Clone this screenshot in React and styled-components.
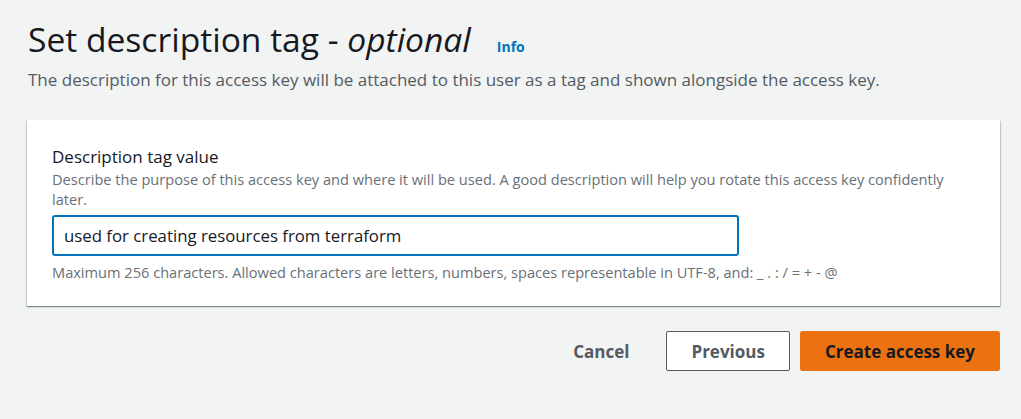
import React from "react";
import styled, { createGlobalStyle } from "styled-components";

const Global = createGlobalStyle`
  html, body { margin: 0; padding: 0; background: #f2f3f3; }
  body { font-family: "Open Sans", "Noto Sans", sans-serif; color: #16191f; }
`;

const Page = styled.div`
  padding: 16px 21px 0 27px;
  display: flex;
  flex-direction: column;
`;

const Header = styled.header`
  padding-left: 1px;
  margin-bottom: 28px;
`;

const TitleRow = styled.div`
  display: flex;
  align-items: baseline;
  gap: 26px;
`;

const Title = styled.h1`
  margin: 0;
  font-size: 33.6px;
  line-height: 46px;
  font-weight: 400;
  color: #16191f;
  em { font-style: italic; }
`;

const InfoLink = styled.a`
  font-size: 14px;
  font-weight: 700;
  color: #0073bb;
  text-decoration: none;
`;

const Lead = styled.p`
  margin: 6px 0 0;
  font-size: 17px;
  line-height: 24px;
  color: #545b64;
`;

const Card = styled.section`
  background: #fff;
  box-shadow: 0 1px 1px 0 rgba(0, 28, 36, 0.3), 1px 1px 1px 0 rgba(0, 28, 36, 0.15),
    -1px 1px 1px 0 rgba(0, 28, 36, 0.15);
  padding: 25px 25px 24px;
`;

const Field = styled.div`
  display: flex;
  flex-direction: column;
`;

const Label = styled.label`
  font-size: 17px;
  line-height: 24px;
  color: #16191f;
`;

const Help = styled.div`
  font-size: 14.6px;
  line-height: 20px;
  color: #687078;
  margin-top: ${(p) => p.$top || 0}px;
`;

const Input = styled.input`
  box-sizing: border-box;
  width: 687px;
  height: 41px;
  margin-top: 6px;
  padding: 0 10px;
  border: 2px solid #0073bb;
  border-radius: 3px;
  font-family: inherit;
  font-size: 16.8px;
  color: #16191f;
  outline: none;
  background: #fff;
`;

const Actions = styled.div`
  display: flex;
  justify-content: flex-end;
  align-items: center;
  gap: 10px;
  margin-top: 25px;
`;

const Button = styled.button`
  box-sizing: border-box;
  height: 40px;
  padding: 0 ${(p) => (p.$variant === "link" ? 26 : 24)}px;
  font-family: inherit;
  font-size: 17px;
  font-weight: 700;
  border-radius: 2px;
  cursor: pointer;
  color: ${(p) => (p.$variant === "primary" ? "#16191f" : "#545b64")};
  background: ${(p) => (p.$variant === "primary" ? "#ec7211" : p.$variant === "normal" ? "#fff" : "transparent")};
  border: 1px solid ${(p) => (p.$variant === "primary" ? "#ec7211" : p.$variant === "normal" ? "#545b64" : "transparent")};
`;

export default function App() {
  return (
    <>
      <Global />
      <Page>
        <Header>
          <TitleRow>
            <Title>
              Set description tag - <em>optional</em>
            </Title>
            <InfoLink href="#">Info</InfoLink>
          </TitleRow>
          <Lead>
            The description for this access key will be attached to this user as a tag and shown alongside the access key.
          </Lead>
        </Header>
        <Card>
          <Field>
            <Label htmlFor="desc">Description tag value</Label>
            <Help>
              Describe the purpose of this access key and where it will be used. A good description will help you rotate this access key confidently later.
            </Help>
            <Input id="desc" defaultValue="used for creating resources from terraform" />
            <Help $top={6}>
              Maximum 256 characters. Allowed characters are letters, numbers, spaces representable in UTF-8, and: _ . : / = + - @
            </Help>
          </Field>
        </Card>
        <Actions>
          <Button $variant="link">Cancel</Button>
          <Button $variant="normal">Previous</Button>
          <Button $variant="primary">Create access key</Button>
        </Actions>
      </Page>
    </>
  );
}
